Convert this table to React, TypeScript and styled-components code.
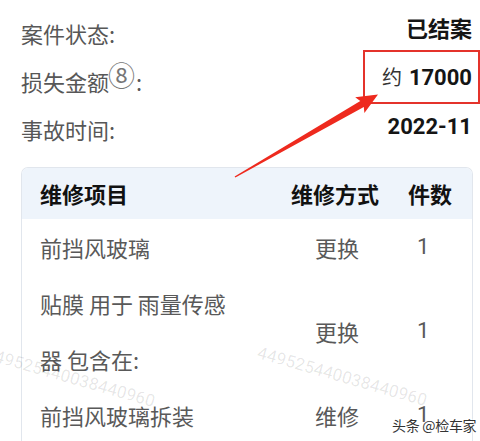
import React from "react";
import styled, { createGlobalStyle } from "styled-components";

const Global = createGlobalStyle`
  html, body { margin: 0; padding: 0; background: #ffffff; }
  body { font-family: "Noto Sans CJK SC", "Noto Sans", "Liberation Sans", sans-serif; }
`;

const Page = styled.div`
  position: relative;
  width: 480px;
  height: 441px;
  overflow: hidden;
  background: #fff;
  padding: 9px 8px 0 21px;
  box-sizing: border-box;
`;

const InfoRow = styled.div`
  display: flex;
  align-items: center;
  justify-content: space-between;
  height: 48px;
`;

const Label = styled.span`
  font-size: 22px;
  color: #575757;
  line-height: 1;
`;

const Circled = styled.span`
  font-size: 27px;
  line-height: 0;
  color: #777;
  position: relative;
  top: -5px;
  margin: 0 1px 0 -1px;
  font-family: "Noto Sans CJK SC", sans-serif;
`;

const Value = styled.span<{ $shift?: number }>`
  font-size: 22px;
  font-weight: 700;
  color: #151515;
  line-height: 1;
  font-family: "Roboto", "Noto Sans CJK SC", sans-serif;
  position: relative;
  top: ${(p) => p.$shift ?? 0}px;
`;

const Approx = styled.span`
  font-weight: 400;
  font-size: 20px;
  color: #333;
  margin-right: 7px;
  font-family: "Noto Sans CJK SC", sans-serif;
`;

const Card = styled.div`
  margin-top: 14px;
  width: 450px;
  border: 1px solid #e1e6ed;
  border-bottom: none;
  border-radius: 7px 7px 0 0;
  overflow: hidden;
`;

const Grid = styled.div<{ $head?: boolean }>`
  display: grid;
  grid-template-columns: 249px 128px 1fr;
  background: ${(p) => (p.$head ? "#eef4fb" : "#fff")};
  align-items: center;
  min-height: ${(p) => (p.$head ? 51 : 56)}px;
`;

const Cell = styled.div<{ $head?: boolean; $align?: string; $pl?: number; $pr?: number }>`
  font-size: 22px;
  line-height: 56px;
  font-weight: ${(p) => (p.$head ? 700 : 400)};
  color: ${(p) => (p.$head ? "#111" : "#595959")};
  text-align: ${(p) => p.$align ?? "left"};
  padding-left: ${(p) => p.$pl ?? 0}px;
  padding-right: ${(p) => p.$pr ?? 0}px;
  ${(p) => (p.$head ? "line-height: 51px;" : "")}
`;

const NumCell = styled(Cell)`
  font-family: "Roboto", "Noto Sans CJK SC", sans-serif;
`;

const HighlightBox = styled.div`
  position: absolute;
  left: 363px;
  top: 50px;
  width: 113px;
  height: 50px;
  border: 2px solid #e4332b;
`;

const Overlay = styled.svg`
  position: absolute;
  left: 0;
  top: 0;
  pointer-events: none;
`;

const Watermark = styled.div<{ $x: number; $y: number }>`
  position: absolute;
  left: ${(p) => p.$x}px;
  top: ${(p) => p.$y}px;
  font-family: "Roboto", sans-serif;
  font-size: 17px;
  color: rgba(0, 0, 0, 0.1);
  transform: rotate(16deg);
  transform-origin: left center;
  white-space: nowrap;
  letter-spacing: 0.2px;
`;

const Brand = styled.div`
  position: absolute;
  left: 392px;
  top: 415px;
  font-size: 14px;
  color: #333;
  letter-spacing: -0.3px;
  text-shadow: 0 0 2px #fff, 0 0 2px #fff, 0 0 1px #fff;
`;

const rows = [
  { name: "前挡风玻璃", way: "更换", qty: "1" },
  { name: "贴膜 用于 雨量传感器 包含在:", way: "更换", qty: "1" },
  { name: "前挡风玻璃拆装", way: "维修", qty: "1" },
];

export default function App() {
  return (
    <>
      <Global />
      <Page>
        <InfoRow>
          <Label>案件状态:</Label>
          <Value $shift={-3}>已结案</Value>
        </InfoRow>
        <InfoRow>
          <Label>
            损失金额<Circled>⑧</Circled>:
          </Label>
          <Value $shift={-3}>
            <Approx>约</Approx>17000
          </Value>
        </InfoRow>
        <InfoRow>
          <Label>事故时间:</Label>
          <Value $shift={-2}>2022-11</Value>
        </InfoRow>

        <Card>
          <Grid $head>
            <Cell $head $pl={18}>维修项目</Cell>
            <Cell $head $align="center">维修方式</Cell>
            <Cell $head $pl={9}>件数</Cell>
          </Grid>
          {rows.map((r) => (
            <Grid key={r.name}>
              <Cell $pl={18} $pr={30}>{r.name}</Cell>
              <Cell $align="center" $pl={4}>{r.way}</Cell>
              <NumCell $pl={18}>{r.qty}</NumCell>
            </Grid>
          ))}
        </Card>

        <Watermark $x={-14} $y={343}>449525440038440960</Watermark>
        <Watermark $x={258} $y={342}>449525440038440960</Watermark>

        <HighlightBox />
        <Overlay width="480" height="441" viewBox="0 0 480 441">
          <polygon
            points="234.6,176.6 360.3,101 355.2,97.2 378,94.5 364.4,113 363.8,107 235.4,177.6"
            fill="#ee2a1e"
          />
        </Overlay>
        <Brand>头条 @检车家</Brand>
      </Page>
    </>
  );
}
